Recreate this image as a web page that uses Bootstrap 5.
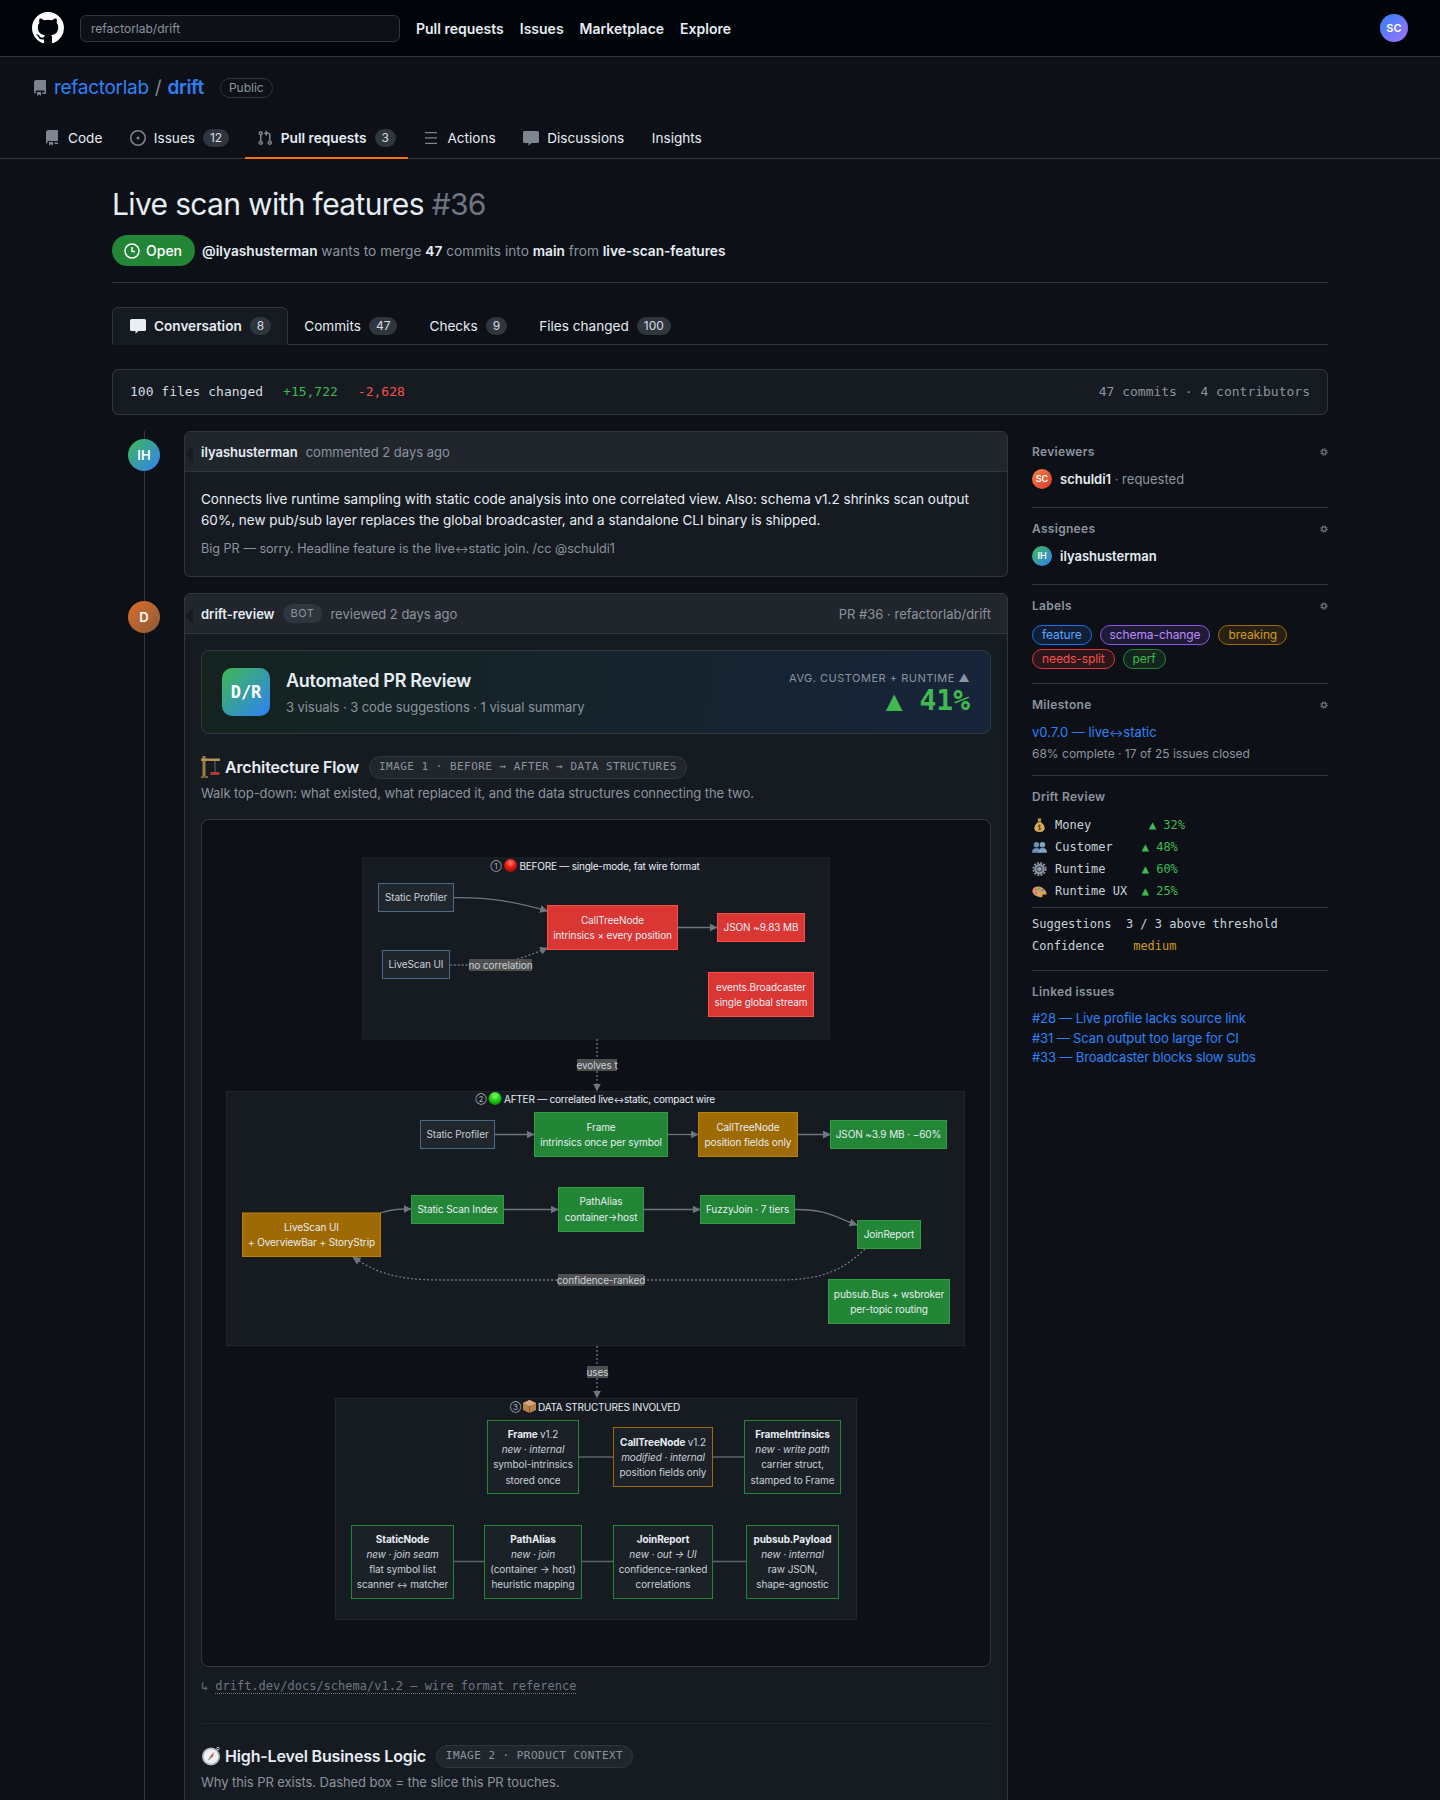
<!DOCTYPE html>
<html lang="en">
<head>
<meta charset="UTF-8">
<meta name="viewport" content="width=device-width, initial-scale=1.0">
<title>Live scan with features #36</title>
<link href="https://cdn.jsdelivr.net/npm/bootstrap@5.3.1/dist/css/bootstrap.min.css" rel="stylesheet">
<style>
:root { --mono: "DejaVu Sans Mono", "Liberation Mono", monospace; }
html, body { background: #0d1117; }
body { font-family: Inter, "Noto Sans", sans-serif; font-size: 14px; color: #e6edf3; line-height: 20px; }
a { text-decoration: none; color: #2f81f7; }
svg { flex: none; display: block; }
.page-frame { height: 1800px; overflow: hidden; }
.ar { font-size: .8em; line-height: 0; }

/* top bar */
.top-bar { height: 57px; padding: 0 32px; background: #010409; border-bottom: 1px solid #30363d; flex-wrap: nowrap; justify-content: flex-start; }
.top-search.form-control { width: 320px; height: 27px; margin-left: 16px; padding: 0 10px; font-size: 12px; background: #0d1117; border: 1px solid #30363d; color: #8b949e; }
.top-search.form-control::placeholder { color: #8b949e; opacity: 1; }
.top-links { margin-left: 16px; margin-top: 2px; gap: 16px; }
.top-links a { color: #e6edf3; font-weight: 600; }
.av { display: flex; align-items: center; justify-content: center; border-radius: 50%; color: #fff; font-weight: 600; flex: none; }
.av-28 { width: 28px; height: 28px; font-size: 11px; }
.av-32 { width: 32px; height: 32px; font-size: 13px; position: relative; z-index: 1; }
.av-20 { width: 20px; height: 20px; font-size: 9px; }
.grad-sc-top { background: linear-gradient(135deg, #2f81f7, #a371f7); }
.grad-sc { background: linear-gradient(135deg, #f0883e, #da3633); }
.grad-ih { background: linear-gradient(135deg, #3fb950, #2f81f7); }
.grad-d { background: linear-gradient(135deg, #db6d28, #8b5a3c); }

/* repo head */
.repo-head { border-bottom: 1px solid #30363d; height: 102px; padding-top: 19px; }
.repo-title { height: 24px; padding-left: 32px; font-size: 19px; letter-spacing: -.015em; gap: 6px; }
.repo-title svg { fill: #7d8590; }
.repo-slash { color: #7d8590; }
.repo-public { margin-left: 10px; height: 20px; padding: 0 8px; border: 1px solid #30363d; border-radius: 10px; font-size: 12px; letter-spacing: 0; color: #8b949e; line-height: 18px; }
.repo-tabs { margin-top: 17px; padding-left: 32px; gap: 3.5px; height: 42px; font-size: 13.6px; }
.repo-tabs a { display: flex; align-items: center; gap: 8px; height: 41px; padding: 0 12px; color: #e6edf3; }
.repo-tabs a svg { fill: #7d8590; }
.repo-tabs a.on { font-weight: 600; font-size: 13.7px; height: 42px; box-shadow: inset 0 -2px 0 #f9730f; }
.cnt.badge { background: #30363d; color: #d5dce3; font-weight: 400; font-size: 12px; line-height: 18px; padding: 0 7px; min-width: 20px; border-radius: 10px; }

/* pr head */
.pr-main { padding: 25px 112px 0; }
.pr-title { font-size: 30px; letter-spacing: -.022em; line-height: 40px; font-weight: 400; margin: 0 0 11px; color: #e6edf3; }
.pr-title span { color: #6e7681; }
.pr-meta { height: 48px; padding-bottom: 16px; border-bottom: 1px solid #30363d; gap: 7px; color: #8b949e; font-size: 13.7px; }
.pr-meta b { color: #e6edf3; font-weight: 600; }
.open-pill.badge { display: flex; align-items: center; gap: 6px; height: 31px; padding: 0 13px 0 12px; background: #238636; color: #fff; font-size: 14px; font-weight: 500; border-radius: 16px; }
.pr-tabs { margin-top: 24px; height: 38px; border-bottom: 1px solid #30363d; font-size: 13.6px; }
.pr-tabs a { display: flex; align-items: center; gap: 8px; height: 38px; padding: 0 16px; color: #e6edf3; }
.pr-tabs a.on { font-weight: 600; background: #161b22; height: 38px; padding-left: 17px; border: 1px solid #30363d; border-bottom-color: #161b22; border-radius: 6px 6px 0 0; }
.pr-tabs a.on svg { fill: #e6edf3; }
.stats-box { margin-top: 24px; height: 46px; padding: 0 17px; background: #161b22; border: 1px solid #30363d; border-radius: 6px; font-family: var(--mono); font-size: 13px; color: #d5dce3; }
.stats-box .add { color: #3fb950; margin-left: 20px; }
.stats-box .del { color: #f85149; margin-left: 20px; }
.stats-box .rest { color: #8b949e; margin-left: auto; }

/* timeline */
.pr-cols { margin-top: 16px; gap: 24px; align-items: flex-start; }
.tl { width: 896px; flex: none; position: relative; }
.tl::before { content: ""; position: absolute; left: 32px; top: 0; bottom: 0; width: 1px; background: #30363d; }
.tl-item { padding-left: 16px; gap: 24px; margin-bottom: 16px; }
.tl-item > .av { margin-top: 8px; }
.cm.card { width: 824px; background: #161b22; border: 1px solid #30363d; border-radius: 6px; position: relative; color: #e6edf3; }
.cm.card::before { content: ""; position: absolute; left: 0; top: 14px; border-style: solid; border-width: 8px 8px 8px 0; border-color: transparent #161b22 transparent transparent; }
.cm .card-header { height: 40px; padding: 0 16px; background: #21262d; border-bottom: 1px solid #30363d; font-size: 13px; color: #8b949e; gap: 8px; border-radius: 5px 5px 0 0; }
.cm .card-header b { color: #e6edf3; font-weight: 600; }
.cm .card-body { padding: 17px 16px; }
.cm-text { margin: 0; line-height: 21px; font-size: 13.5px; }
.cm-note { margin: 8px 0 0; font-size: 12.6px; color: #8b949e; }
.bot-chip.badge { background: #30363d; color: #8b949e; font-size: 11px; font-weight: 400; letter-spacing: .5px; padding: 0 8px; line-height: 19px; border-radius: 10px; }
.cm-right { margin-left: auto; }

.sum-box { height: 84px; padding: 0 20px; gap: 16px; border: 1px solid #30363d; border-radius: 8px; background: linear-gradient(100deg, #14231f, #18243a); }
.sum-logo { width: 48px; height: 48px; border-radius: 10px; background: linear-gradient(135deg, #3fb950, #2f81f7); font-family: var(--mono); font-weight: 700; font-size: 17px; color: #fff; }
.sum-text { padding-top: 2px; }
.sum-title { font-size: 18px; letter-spacing: -.017em; font-weight: 600; line-height: 24px; }
.sum-sub { font-size: 13px; letter-spacing: -.07px; color: #8b949e; margin-top: 4px; line-height: 20px; }
.sum-right { margin-left: auto; padding-top: 4px; text-align: right; }
.sum-lab { font-size: 11px; letter-spacing: .5px; color: #8b949e; line-height: 14px; }
.sum-val { font-family: var(--mono); font-size: 28px; font-weight: 700; color: #3fb950; line-height: 32px; }

.sec-head { height: 24px; gap: 4px; font-size: 16px; letter-spacing: -.01em; font-weight: 600; }
.sec-first { margin-top: 21px; }
.sec-pill { margin-left: 6px; height: 23px; padding: 0 9px; display: flex; align-items: center; background: #21262d; border: 1px solid #30363d; border-radius: 12px; font-family: var(--mono); font-size: 11px; font-weight: 400; letter-spacing: .47px; color: #8b949e; }
.sec-sub { margin: 4px 0 0; font-size: 13px; letter-spacing: -.07px; color: #8b949e; }
.dia-box { margin-top: 16px; height: 848px; background: #0d1117; border: 1px solid #30363d; border-radius: 8px; }
.doc-ref { margin-top: 10px; font-family: var(--mono); font-size: 12px; line-height: 18px; color: #6e7681; }
.doc-ref a { color: #6e7681; border-bottom: 1px dotted #6e7681; margin-left: 7px; }
.sec-rule { margin: 28px 0 20px; height: 1px; background: #21262d; }

/* sidebar */
.side { width: 296px; flex: none; font-size: 13px; }
.side-sec { padding: 12px 0; border-bottom: 1px solid #30363d; }
.side-sec:last-child { border-bottom: 0; }
.side-title { font-size: 12px; font-weight: 600; letter-spacing: .3px; line-height: 18px; color: #8b949e; margin-bottom: 8px; }
.side-who { gap: 8px; height: 20px; padding-bottom: 0; margin-bottom: 6px; }
.side-who b { font-weight: 600; color: #e6edf3; }
.side-who span { color: #8b949e; }
.lab-wrap { gap: 4px 8px; margin-top: 10px; margin-bottom: 2px; }
.lab { height: 20px; padding: 0 9px; border: 1px solid; border-radius: 10px; font-size: 12px; letter-spacing: -.1px; line-height: 18px; }
.lab-blue { color: #58a6ff; border-color: #1f6feb; background: rgba(31,111,235,.15); }
.lab-purple { color: #bc8cff; border-color: #8957e5; background: rgba(137,87,229,.15); }
.lab-amber { color: #d29922; border-color: #9e6a03; background: rgba(187,128,9,.15); }
.lab-red { color: #f85149; border-color: #da3633; background: rgba(218,54,51,.15); }
.lab-green { color: #3fb950; border-color: #238636; background: rgba(46,160,67,.15); }
.ms-sub { margin-top: 3px; font-size: 12px; line-height: 18px; color: #8b949e; }
.mono-row { font-family: var(--mono); font-size: 12px; line-height: 22px; white-space: pre; color: #c9d1d9; gap: 8px; height: 22px; }
.mono-row em { font-style: normal; color: #3fb950; }
.mono-row i { font-style: normal; color: #d29922; }
.sec-tight { padding-bottom: 5px; }
.sec-sug { padding-top: 5px; padding-bottom: 13px; }
.linked a { display: block; line-height: 19.5px; letter-spacing: -.13px; }

/* diagram */
.dg text { font-family: Inter, "DejaVu Sans", sans-serif; font-size: 10px; letter-spacing: -.1px; text-anchor: middle; fill: #c9d1d9; }
.dg .on-fill { fill: #e6edf3; }
.dg .tt { fill: #e6edf3; text-anchor: start; letter-spacing: -.22px; }
.dg .gl { fill: #a9b1ba; text-anchor: middle; font-size: 8px; letter-spacing: 0; }
.dg .el { fill: #c9d1d9; }
.dg .bd { font-weight: 700; fill: #e6edf3; }
.dg tspan.n { font-weight: 400; fill: #c9d1d9; }
.dg tspan.ar { font-size: 8px; }
.dg .it { font-style: italic; }
.sg { fill: #161b22; stroke: #21262d; }
.n-plain { fill: #21262d; stroke: #4a6a8a; stroke-width: 1; }
.n-red { fill: #da3633; stroke: #f85149; }
.n-green { fill: #238636; stroke: #2ea043; }
.n-amber { fill: #9e6a03; stroke: #bb8009; }
.n-gbox { fill: #1c2128; stroke: #238636; }
.n-abox { fill: #1c2128; stroke: #9e6a03; }
.edge { fill: none; stroke: #6e7681; stroke-width: 1.300; }
.edge-dot { fill: none; stroke: #6e7681; stroke-width: 1.300; stroke-dasharray: 2 2; }
.edge-flat { stroke: #5c636c; stroke-width: 1.300; fill: none; }
.lbl { fill: #4f4f4f; }
</style>
</head>
<body>
<div class="page-frame">

<svg width="0" height="0" class="position-absolute">
  <defs>
    <symbol id="i-bookfill" viewBox="0 0 16 16"><path d="M2 2.5A2.5 2.5 0 014.5 0H14v11H4.5a1 1 0 00-.8 1.7l-1.1 1A2.5 2.5 0 012 11.5zM5 12h4v3.6l-2-1.3-2 1.3zM10.5 12.5H14V14h-3.5z"/></symbol>
    <symbol id="i-repo" viewBox="0 0 16 16"><path d="M2 2.5A2.5 2.5 0 014.5 0h8.75a.75.75 0 01.75.75v12.5a.75.75 0 01-.75.75h-2.5a.75.75 0 110-1.5h1.75v-2h-8a1 1 0 00-.714 1.7.75.75 0 01-1.072 1.05A2.495 2.495 0 012 11.5v-9zm10.5-1V9h-8c-.356 0-.694.074-1 .208V2.5a1 1 0 011-1h8zM5 12.25v3.25a.25.25 0 00.4.2l1.45-1.087a.25.25 0 01.3 0L8.6 15.7a.25.25 0 00.4-.2v-3.25a.25.25 0 00-.25-.25h-3.5a.25.25 0 00-.25.25z"/></symbol>
    <symbol id="i-issue" viewBox="0 0 16 16"><path d="M8 9.5a1.5 1.5 0 100-3 1.5 1.5 0 000 3z"/><path d="M8 0a8 8 0 110 16A8 8 0 018 0zM1.5 8a6.5 6.5 0 1013 0 6.5 6.5 0 00-13 0z"/></symbol>
    <symbol id="i-pr" viewBox="0 0 16 16"><path d="M1.5 3.25a2.25 2.25 0 113 2.122v5.256a2.251 2.251 0 11-1.5 0V5.372A2.25 2.25 0 011.5 3.25zm5.677-.177L9.573.677A.25.25 0 0110 .854V2.5h1A2.5 2.5 0 0113.5 5v5.628a2.251 2.251 0 11-1.5 0V5a1 1 0 00-1-1h-1v1.646a.25.25 0 01-.427.177L7.177 3.427a.25.25 0 010-.354zM3.75 2.5a.75.75 0 100 1.5.75.75 0 000-1.5zm0 9.5a.75.75 0 100 1.5.75.75 0 000-1.5zm8.25.75a.75.75 0 101.5 0 .75.75 0 00-1.5 0z"/></symbol>
    <symbol id="i-lines" viewBox="0 0 16 16"><path d="M2 2h12v1.3H2zM2 7.3h12v1.3H2zM2 12.7h12V14H2z"/></symbol>
    <symbol id="i-bubble" viewBox="0 0 16 16"><path d="M1.5 1h13A1.5 1.5 0 0116 2.5v9a1.5 1.5 0 01-1.5 1.5H8.5l-3 2.8V13h-4A1.5 1.5 0 010 11.5v-9A1.5 1.5 0 011.5 1z"/></symbol>
    <symbol id="i-gear" viewBox="0 0 10 10"><circle cx="5" cy="5" r="2.600" fill="none" stroke="#6e7681" stroke-width="1.6"/><circle cx="5" cy="5" r="4" fill="none" stroke="#6e7681" stroke-width="1.4" stroke-dasharray="1.5 1.640"/></symbol>
    <symbol id="e-money" viewBox="0 0 16 16"><path d="M6 1h4L9.2 4h-2.400z" fill="#c9a15a"/><rect x="6" y="3.700" width="4" height="1.200" fill="#8a6a30"/><path d="M6.200 5C3.800 7 2.500 9 2.500 11.500 2.500 14 4.500 15.500 8 15.500s5.500-1.500 5.500-4C13.500 9 12.200 7 9.800 5z" fill="#d9ad5f"/><path d="M9.700 8.800C9 8 6.600 8 6.600 9.500s2.900 1 2.900 2.500-2.500 1.500-3.200.6M8 7.500v6" fill="none" stroke="#5d4320" stroke-width=".9"/></symbol>
    <symbol id="e-busts" viewBox="0 0 16 16"><g fill="#6d8fb3"><circle cx="4.800" cy="5.500" r="2.900"/><path d="M0 14c0-3.500 2-5 4.800-5s4.300 1.500 4.300 5z"/></g><g fill="#7fa3c9"><circle cx="11.200" cy="5.500" r="2.900"/><path d="M7 14c0-3.500 1.500-5 4.200-5S16 10.500 16 14z"/></g></symbol>
    <symbol id="e-gear" viewBox="0 0 16 16"><circle cx="8" cy="8" r="5.600" fill="#8b949e"/><circle cx="8" cy="8" r="6.600" fill="none" stroke="#8b949e" stroke-width="2" stroke-dasharray="2 1.450"/><circle cx="8" cy="8" r="3.400" fill="#4d5560"/><circle cx="8" cy="8" r="2" fill="#9aa3ad"/></symbol>
    <symbol id="e-palette" viewBox="0 0 16 16"><path d="M.5 7.500C1 4 5 2.500 8.500 3.500c3 .8 6 3.300 7 6.500.5 1.500-1 2.300-2.300 1.800-1.300-.5-2.200.3-2 1.500.2 1.300-1.200 1.700-3 1.200C3.500 13.500 0 11 .5 7.500z" fill="#d9a05b"/><circle cx="4" cy="6.500" r="1.200" fill="#e5534b"/><circle cx="7.500" cy="5.500" r="1.200" fill="#3fb950"/><circle cx="11" cy="7" r="1.200" fill="#2f81f7"/><circle cx="4.200" cy="10" r="1.200" fill="#a371f7"/><circle cx="7.500" cy="11.500" r="1.200" fill="#e3b341"/></symbol>
    <symbol id="e-crane" viewBox="0 0 20 24"><path d="M1.500 1h3v20h-3z" fill="#9b7a45"/><path d="M0 3.500h19v2.500H0z" fill="#b59259"/><path d="M13.500 6h1v11h-1z" fill="#6b6b6b"/><path d="M9.500 17h9v3h-9z" fill="#b33a32"/><path d="M0 21h7v2H0z" fill="#7a6238"/></symbol>
    <symbol id="e-compass" viewBox="0 0 20 20"><circle cx="10" cy="10.500" r="9" fill="#b7bcc2"/><circle cx="10" cy="10.500" r="7.200" fill="#eef0f2"/><path d="M13.500 6l-2.500 5.800-2-1.500z" fill="#da3633"/><path d="M6.500 15l2.500-4.700 2 1.500z" fill="#8b949e"/><circle cx="17" cy="2.500" r="1.300" fill="none" stroke="#b7bcc2"/></symbol>
    <radialGradient id="ball-r" cx=".5" cy=".3" r=".7"><stop offset="0" stop-color="#ff7a70"/><stop offset=".55" stop-color="#e01b10"/><stop offset="1" stop-color="#9a0e08"/></radialGradient>
    <radialGradient id="ball-g" cx=".5" cy=".3" r=".7"><stop offset="0" stop-color="#7dff6c"/><stop offset=".55" stop-color="#1fce12"/><stop offset="1" stop-color="#0d8a08"/></radialGradient>
    <marker id="arw" viewBox="0 0 8 8" refX="7.500" refY="4" markerWidth="8" markerHeight="8" orient="auto" markerUnits="userSpaceOnUse"><path d="M0 0L8 4L0 8z" fill="#6e7681"/></marker>
  </defs>
</svg>

<nav class="navbar top-bar">
  <a href="#" aria-label="GitHub"><svg width="32" height="32" viewBox="0 0 16 16" fill="#fff"><path d="M8 0C3.58 0 0 3.58 0 8c0 3.54 2.29 6.53 5.47 7.59.4.07.55-.17.55-.38 0-.19-.01-.82-.01-1.49-2.01.37-2.53-.49-2.69-.94-.09-.23-.48-.94-.82-1.13-.28-.15-.68-.52-.01-.53.63-.01 1.08.58 1.23.82.72 1.21 1.87.87 2.33.66.07-.52.28-.87.51-1.07-1.78-.2-3.64-.89-3.64-3.95 0-.87.31-1.59.82-2.15-.08-.2-.36-1.02.08-2.12 0 0 .67-.21 2.2.82.64-.18 1.32-.27 2-.27.68 0 1.36.09 2 .27 1.53-1.04 2.2-.82 2.2-.82.44 1.1.16 1.92.08 2.12.51.56.82 1.27.82 2.15 0 3.07-1.87 3.75-3.65 3.95.29.25.54.73.54 1.48 0 1.07-.01 1.93-.01 2.2 0 .21.15.46.55.38A8.013 8.013 0 0016 8c0-4.42-3.58-8-8-8z"/></svg></a>
  <input class="form-control top-search" type="text" placeholder="refactorlab/drift">
  <div class="d-flex top-links">
    <a href="#">Pull requests</a><a href="#">Issues</a><a href="#">Marketplace</a><a href="#">Explore</a>
  </div>
  <div class="av av-28 grad-sc-top ms-auto">SC</div>
</nav>

<div class="repo-head">
  <div class="d-flex align-items-center repo-title">
    <svg width="16" height="16"><use href="#i-repo"/></svg>
    <a href="#">refactorlab</a><span class="repo-slash">/</span><a href="#" class="fw-semibold">drift</a>
    <span class="repo-public">Public</span>
  </div>
  <div class="d-flex repo-tabs">
    <a href="#"><svg width="16" height="16"><use href="#i-bookfill"/></svg>Code</a>
    <a href="#"><svg width="16" height="16"><use href="#i-issue"/></svg>Issues <span class="badge cnt">12</span></a>
    <a href="#" class="on"><svg width="16" height="16"><use href="#i-pr"/></svg>Pull requests <span class="badge cnt">3</span></a>
    <a href="#"><svg width="16" height="16"><use href="#i-lines"/></svg>Actions</a>
    <a href="#"><svg width="16" height="16"><use href="#i-bubble"/></svg>Discussions</a>
    <a href="#">Insights</a>
  </div>
</div>

<main class="pr-main">
  <h1 class="pr-title">Live scan with features <span>#36</span></h1>
  <div class="d-flex pr-meta">
    <span class="badge open-pill"><svg width="16" height="16" viewBox="0 0 16 16" fill="none" stroke="#fff" stroke-width="1.500"><circle cx="8" cy="8" r="7"/><path d="M8 4v4.500h3"/></svg>Open</span>
    <span class="align-self-center"><b>@ilyashusterman</b> wants to merge <b>47</b> commits into <b>main</b> from <b>live-scan-features</b></span>
  </div>

  <div class="d-flex pr-tabs">
    <a href="#" class="on"><svg width="16" height="16"><use href="#i-bubble"/></svg>Conversation <span class="badge cnt">8</span></a>
    <a href="#">Commits <span class="badge cnt">47</span></a>
    <a href="#">Checks <span class="badge cnt">9</span></a>
    <a href="#">Files changed <span class="badge cnt">100</span></a>
  </div>

  <div class="d-flex align-items-center stats-box">
    <span>100 files changed</span><span class="add">+15,722</span><span class="del">-2,628</span><span class="rest">47 commits · 4 contributors</span>
  </div>

  <div class="d-flex pr-cols">
    <div class="tl">
      <div class="d-flex tl-item">
        <div class="av av-32 grad-ih">IH</div>
        <div class="card cm">
          <div class="card-header d-flex align-items-center"><b>ilyashusterman</b><span>commented 2 days ago</span></div>
          <div class="card-body">
            <p class="cm-text">Connects live runtime sampling with static code analysis into one correlated view. Also: schema v1.2 shrinks scan output 60%, new pub/sub layer replaces the global broadcaster, and a standalone CLI binary is shipped.</p>
            <p class="cm-note">Big PR — sorry. Headline feature is the live<span class="ar">↔</span>static join. /cc @schuldi1</p>
          </div>
        </div>
      </div>

      <div class="d-flex tl-item">
        <div class="av av-32 grad-d">D</div>
        <div class="card cm">
          <div class="card-header d-flex align-items-center"><b>drift-review</b><span class="badge bot-chip">BOT</span><span>reviewed 2 days ago</span><span class="cm-right">PR #36 · refactorlab/drift</span></div>
          <div class="card-body pt-3">
            <div class="d-flex align-items-center sum-box">
              <div class="d-flex align-items-center justify-content-center sum-logo">D/R</div>
              <div class="sum-text">
                <div class="sum-title">Automated PR Review</div>
                <div class="sum-sub">3 visuals · 3 code suggestions · 1 visual summary</div>
              </div>
              <div class="sum-right">
                <div class="sum-lab">AVG. CUSTOMER + RUNTIME ▲</div>
                <div class="sum-val">▲ 41%</div>
              </div>
            </div>

            <div class="d-flex align-items-center sec-head sec-first">
              <svg width="20" height="24"><use href="#e-crane"/></svg>
              <span>Architecture Flow</span><span class="sec-pill">IMAGE 1 · BEFORE → AFTER → DATA STRUCTURES</span>
            </div>
            <p class="sec-sub">Walk top-down: what existed, what replaced it, and the data structures connecting the two.</p>

            <div class="dia-box">
              <svg class="dg" width="788" height="846" viewBox="202 820 788 846">
                <!-- BEFORE -->
                <rect class="sg" x="363" y="858" width="466" height="181"/>
                <text class="gl" x="496" y="869">①</text>
                <circle cx="510.500" cy="865.500" r="6.500" fill="url(#ball-r)"/>
                <text class="tt" x="519.500" y="869.500">BEFORE — single-mode, fat wire format</text>

                <path class="edge" marker-end="url(#arw)" d="M453.500 897.700C490 897 515 902 547.500 911"/>
                <path class="edge-dot" marker-end="url(#arw)" d="M449.700 965H490C510 963 530 955 547.500 948"/>
                <path class="edge" marker-end="url(#arw)" d="M678 927.500H717"/>

                <rect class="n-plain" x="378.500" y="883.500" width="75" height="28"/>
                <text x="416" y="901">Static Profiler</text>
                <rect class="n-plain" x="382.500" y="950.500" width="67" height="28"/>
                <text x="416" y="968">LiveScan UI</text>
                <rect class="lbl" x="469" y="959" width="63" height="12"/>
                <text class="el" x="500.500" y="968.500">no correlation</text>
                <rect class="n-red" x="547.500" y="905.500" width="130" height="44"/>
                <text class="on-fill" x="612.500" y="924">CallTreeNode</text>
                <text class="on-fill" x="612.500" y="939">intrinsics × every position</text>
                <rect class="n-red" x="717.500" y="913.500" width="87" height="28"/>
                <text class="on-fill" x="761" y="931">JSON ~9.83 MB</text>
                <rect class="n-red" x="708.500" y="972.500" width="105" height="44"/>
                <text class="on-fill" x="761" y="991">events.Broadcaster</text>
                <text class="on-fill" x="761" y="1006">single global stream</text>

                <path class="edge-dot" marker-end="url(#arw)" d="M597 1039V1091"/>
                <rect class="lbl" x="577" y="1059" width="40" height="12"/>
                <text class="el" x="597" y="1068.500">evolves t</text>

                <!-- AFTER -->
                <rect class="sg" x="226.500" y="1091.500" width="738" height="254"/>
                <text class="gl" x="481" y="1102">②</text>
                <circle cx="495" cy="1098.500" r="6.500" fill="url(#ball-g)"/>
                <text class="tt" x="504" y="1102.500">AFTER — correlated live<tspan class="ar">↔</tspan>static, compact wire</text>

                <path class="edge" marker-end="url(#arw)" d="M494.500 1134.500H534"/>
                <path class="edge" marker-end="url(#arw)" d="M667.500 1134.500H698"/>
                <path class="edge" marker-end="url(#arw)" d="M797.500 1134.500H830.500"/>
                <path class="edge" marker-end="url(#arw)" d="M380.500 1213C392 1209 400 1209 411 1209"/>
                <path class="edge" marker-end="url(#arw)" d="M503.500 1209.500H558"/>
                <path class="edge" marker-end="url(#arw)" d="M644 1209.500H700"/>
                <path class="edge" marker-end="url(#arw)" d="M795 1209.500C825 1209 835 1217 857 1225"/>
                <path class="edge-dot" marker-end="url(#arw)" d="M865 1249C845 1268 825 1280 780 1280H440C395 1280 375 1272 353 1257"/>

                <rect class="n-plain" x="420.500" y="1120.500" width="74" height="28"/>
                <text x="457.500" y="1138">Static Profiler</text>
                <rect class="n-green" x="534.500" y="1112.500" width="133" height="44"/>
                <text class="on-fill" x="601" y="1131">Frame</text>
                <text class="on-fill" x="601" y="1146">intrinsics once per symbol</text>
                <rect class="n-amber" x="698.500" y="1112.500" width="99" height="44"/>
                <text class="on-fill" x="748" y="1131">CallTreeNode</text>
                <text class="on-fill" x="748" y="1146">position fields only</text>
                <rect class="n-green" x="830.500" y="1120.500" width="116" height="28"/>
                <text class="on-fill" x="888.500" y="1138">JSON ~3.9 MB · −60%</text>
                <rect class="n-amber" x="242.500" y="1213" width="138" height="43.500"/>
                <text class="on-fill" x="311.500" y="1231">LiveScan UI</text>
                <text class="on-fill" x="311.500" y="1246">+ OverviewBar + StoryStrip</text>
                <rect class="n-green" x="411.500" y="1195.500" width="92" height="28"/>
                <text class="on-fill" x="457.500" y="1213">Static Scan Index</text>
                <rect class="n-green" x="558.500" y="1187.500" width="85" height="44"/>
                <text class="on-fill" x="601" y="1205">PathAlias</text>
                <text class="on-fill" x="601" y="1221">container→host</text>
                <rect class="n-green" x="700.500" y="1195.500" width="94" height="28"/>
                <text class="on-fill" x="747.500" y="1213">FuzzyJoin · 7 tiers</text>
                <rect class="n-green" x="857.500" y="1220.500" width="63" height="28"/>
                <text class="on-fill" x="889" y="1238">JoinReport</text>
                <rect class="n-green" x="828.500" y="1279.500" width="121" height="44"/>
                <text class="on-fill" x="889" y="1298">pubsub.Bus + wsbroker</text>
                <text class="on-fill" x="889" y="1313">per-topic routing</text>
                <rect class="lbl" x="558" y="1274" width="86" height="12"/>
                <text class="el" x="601" y="1283.500">confidence-ranked</text>

                <path class="edge-dot" marker-end="url(#arw)" d="M597 1346V1398"/>
                <rect class="lbl" x="587" y="1366" width="21" height="12"/>
                <text class="el" x="597.500" y="1375.500">uses</text>

                <!-- DATA STRUCTURES -->
                <rect class="sg" x="335.500" y="1398.500" width="521" height="221"/>
                <text class="gl" x="515.500" y="1410">③</text>
                <path d="M523 1403l6.500-3 6.500 3v7l-6.500 3-6.500-3z" fill="#b5824a"/><path d="M523 1403l6.500 3 6.500-3-6.500-3z" fill="#d6a873"/><path d="M529.500 1406v7" stroke="#7f5a30"/>
                <text class="tt" x="538" y="1410.500">DATA STRUCTURES INVOLVED</text>

                <path class="edge-flat" d="M579 1457H613M713 1457H744M453.500 1561.500H484M582 1561.500H613M713 1561.500H746"/>

                <rect class="n-gbox" x="487.500" y="1420.500" width="91" height="73"/>
                <text class="bd" x="533" y="1438">Frame <tspan class="n">v1.2</tspan></text>
                <text class="it" x="533" y="1453">new · internal</text>
                <text x="533" y="1468">symbol-intrinsics</text>
                <text x="533" y="1484">stored once</text>

                <rect class="n-abox" x="613.500" y="1427.500" width="99" height="59"/>
                <text class="bd" x="663" y="1445.500">CallTreeNode <tspan class="n">v1.2</tspan></text>
                <text class="it" x="663" y="1461">modified · internal</text>
                <text x="663" y="1476">position fields only</text>

                <rect class="n-gbox" x="744.500" y="1420.500" width="96" height="73"/>
                <text class="bd" x="792.500" y="1438">FrameIntrinsics</text>
                <text class="it" x="792.500" y="1453">new · write path</text>
                <text x="792.500" y="1468">carrier struct,</text>
                <text x="792.500" y="1484">stamped to Frame</text>

                <rect class="n-gbox" x="351.500" y="1525.500" width="102" height="73"/>
                <text class="bd" x="402.500" y="1543">StaticNode</text>
                <text class="it" x="402.500" y="1558">new · join seam</text>
                <text x="402.500" y="1573">flat symbol list</text>
                <text x="402.500" y="1588">scanner <tspan class="ar">↔</tspan> matcher</text>

                <rect class="n-gbox" x="484.500" y="1525.500" width="97" height="73"/>
                <text class="bd" x="533" y="1543">PathAlias</text>
                <text class="it" x="533" y="1558">new · join</text>
                <text x="533" y="1573">(container → host)</text>
                <text x="533" y="1588">heuristic mapping</text>

                <rect class="n-gbox" x="613.500" y="1525.500" width="99" height="73"/>
                <text class="bd" x="663" y="1543">JoinReport</text>
                <text class="it" x="663" y="1558">new · out → UI</text>
                <text x="663" y="1573">confidence-ranked</text>
                <text x="663" y="1588">correlations</text>

                <rect class="n-gbox" x="746.500" y="1525.500" width="92" height="73"/>
                <text class="bd" x="792.500" y="1543">pubsub.Payload</text>
                <text class="it" x="792.500" y="1558">new · internal</text>
                <text x="792.500" y="1573">raw JSON,</text>
                <text x="792.500" y="1588">shape-agnostic</text>
              </svg>
            </div>
            <div class="doc-ref">↳<a href="#">drift.dev/docs/schema/v1.2 — wire format reference</a></div>
            <div class="sec-rule"></div>

            <div class="d-flex align-items-center sec-head">
              <svg width="20" height="20"><use href="#e-compass"/></svg>
              <span>High-Level Business Logic</span><span class="sec-pill">IMAGE 2 · PRODUCT CONTEXT</span>
            </div>
            <p class="sec-sub">Why this PR exists. Dashed box = the slice this PR touches.</p>
            <div class="dia-box"></div>
          </div>
        </div>
      </div>
    </div>

    <aside class="side">
      <div class="side-sec">
        <div class="d-flex justify-content-between align-items-center side-title">Reviewers<svg width="8" height="8"><use href="#i-gear"/></svg></div>
        <div class="d-flex align-items-center side-who"><div class="av av-20 grad-sc">SC</div><div><b>schuldi1</b> <span>· requested</span></div></div>
      </div>
      <div class="side-sec">
        <div class="d-flex justify-content-between align-items-center side-title">Assignees<svg width="8" height="8"><use href="#i-gear"/></svg></div>
        <div class="d-flex align-items-center side-who"><div class="av av-20 grad-ih">IH</div><b>ilyashusterman</b></div>
      </div>
      <div class="side-sec">
        <div class="d-flex justify-content-between align-items-center side-title">Labels<svg width="8" height="8"><use href="#i-gear"/></svg></div>
        <div class="d-flex flex-wrap lab-wrap">
          <span class="lab lab-blue">feature</span><span class="lab lab-purple">schema-change</span><span class="lab lab-amber">breaking</span><span class="lab lab-red">needs-split</span><span class="lab lab-green">perf</span>
        </div>
      </div>
      <div class="side-sec">
        <div class="d-flex justify-content-between align-items-center side-title">Milestone<svg width="8" height="8"><use href="#i-gear"/></svg></div>
        <a href="#">v0.7.0 — live<span class="ar">↔</span>static</a>
        <div class="ms-sub">68% complete · 17 of 25 issues closed</div>
      </div>
      <div class="side-sec sec-tight">
        <div class="side-title">Drift Review</div>
        <div class="d-flex align-items-center mono-row"><svg width="15" height="16"><use href="#e-money"/></svg><span>Money        <em>▲ 32%</em></span></div>
        <div class="d-flex align-items-center mono-row"><svg width="15" height="16"><use href="#e-busts"/></svg><span>Customer    <em>▲ 48%</em></span></div>
        <div class="d-flex align-items-center mono-row"><svg width="15" height="16"><use href="#e-gear"/></svg><span>Runtime     <em>▲ 60%</em></span></div>
        <div class="d-flex align-items-center mono-row"><svg width="15" height="16"><use href="#e-palette"/></svg><span>Runtime UX  <em>▲ 25%</em></span></div>
      </div>
      <div class="side-sec sec-sug">
        <div class="mono-row">Suggestions  3 / 3 above threshold</div>
        <div class="mono-row">Confidence    <i>medium</i></div>
      </div>
      <div class="side-sec linked">
        <div class="side-title">Linked issues</div>
        <a href="#">#28 — Live profile lacks source link</a>
        <a href="#">#31 — Scan output too large for CI</a>
        <a href="#">#33 — Broadcaster blocks slow subs</a>
      </div>
    </aside>
  </div>
</main>
</div>
<script src="https://cdn.jsdelivr.net/npm/bootstrap@5.3.1/dist/js/bootstrap.bundle.min.js"></script>
</body>
</html>
